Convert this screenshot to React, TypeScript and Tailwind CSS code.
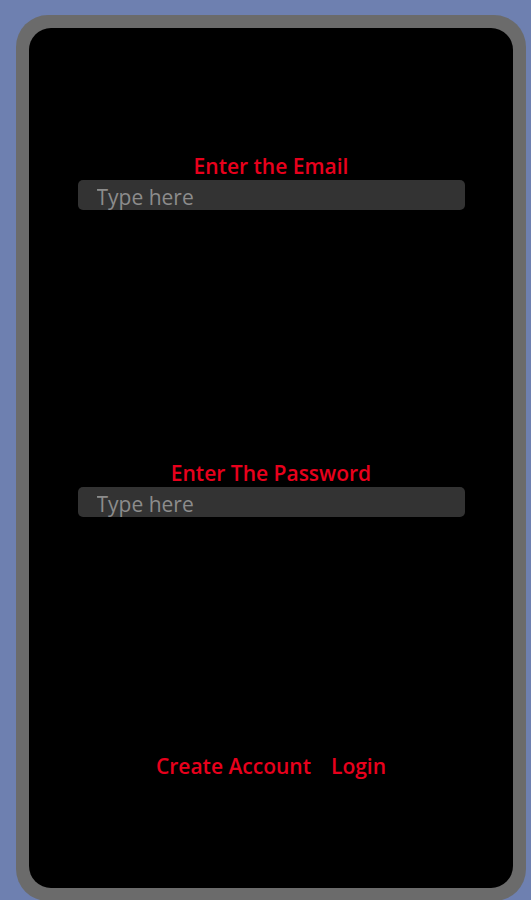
import React from "react";

export default function App() {
  const label = "text-[21px] leading-[24px] font-semibold text-[#e8001c] text-center";
  const input =
    "w-[387px] h-[30px] rounded-[5px] bg-[#333333] pl-[19px] pr-[18px] pt-[3px] text-[21px] leading-[27px] text-[#8c8c8c] placeholder:text-[#8c8c8c] outline-none";
  return (
    <div
      className="w-[531px] h-[900px] bg-[#6e80b0] pt-[15px] pl-[16px] overflow-hidden"
      style={{ fontFamily: '"Open Sans", "Noto Sans", sans-serif' }}
    >
      <div className="w-[510px] h-[886px] bg-[#6b6b6b] rounded-[32px] p-[13px]">
        <div className="w-[484px] h-[860px] bg-black rounded-[22px] flex flex-col items-center">
          <div className="mt-[126px] flex flex-col items-center gap-[2px]">
            <span className={label}>Enter the Email</span>
            <input className={input} placeholder="Type here" />
          </div>
          <div className="mt-[251px] flex flex-col items-center gap-[2px]">
            <span className={label}>Enter The Password</span>
            <input className={input} type="password" placeholder="Type here" />
          </div>
          <div className="mt-[234px] flex items-center gap-[20px] text-[21px] font-semibold text-[#e8001c]">
            <button>Create Account</button>
            <button>Login</button>
          </div>
        </div>
      </div>
    </div>
  );
}
